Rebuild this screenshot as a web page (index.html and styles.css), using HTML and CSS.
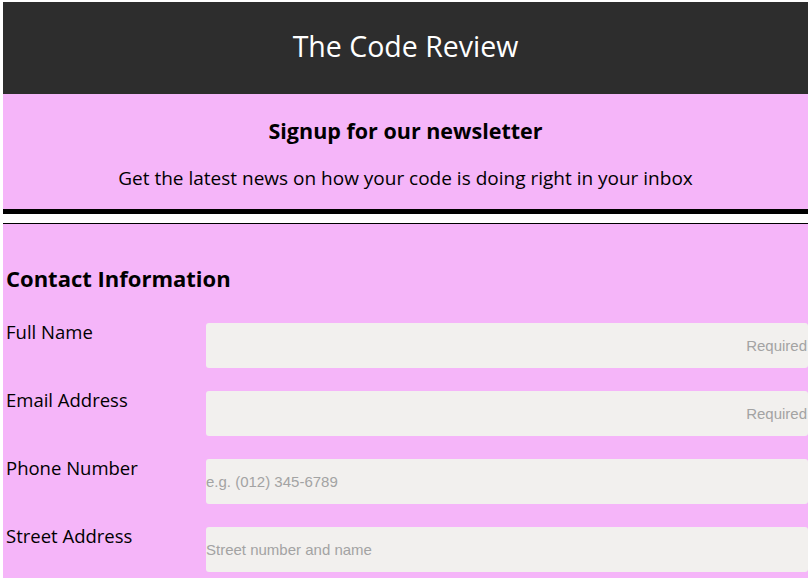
FILE: index.html
```html
<!DOCTYPE html>
<html lang="en">
<head>
<meta charset="utf-8">
<title>The Code Review</title>
<link rel="stylesheet" href="styles.css">
</head>
<body>
<div class="page">
  <header class="masthead">
    <h1 class="masthead-title">The Code Review</h1>
  </header>
  <section class="intro">
    <h2 class="intro-title">Signup for our newsletter</h2>
    <p class="intro-text">Get the latest news on how your code is doing right in your inbox</p>
  </section>
  <div class="divider"></div>
  <form class="signup">
    <h3 class="section-title">Contact Information</h3>
    <div class="field">
      <label class="field-label" for="name">Full Name</label>
      <input class="field-input align-right" id="name" type="text" placeholder="Required">
    </div>
    <div class="field">
      <label class="field-label" for="email">Email Address</label>
      <input class="field-input align-right" id="email" type="email" placeholder="Required">
    </div>
    <div class="field">
      <label class="field-label" for="phone">Phone Number</label>
      <input class="field-input" id="phone" type="tel" placeholder="e.g. (012) 345-6789">
    </div>
    <div class="field">
      <label class="field-label" for="street">Street Address</label>
      <input class="field-input" id="street" type="text" placeholder="Street number and name">
    </div>
  </form>
</div>
</body>
</html>
```

FILE: styles.css
```css
html, body {
  margin: 0;
  padding: 0;
  background: #ffffff;
  overflow: hidden;
}

.page {
  margin: 2px 0 0 3px;
  font-family: "Open Sans", "Noto Sans", sans-serif;
  color: #000;
}

.masthead {
  background: #2d2d2d;
  height: 92px;
  display: flex;
  align-items: center;
  justify-content: center;
}

.masthead-title {
  margin: 0 0 4px;
  color: #ffffff;
  font-weight: 400;
  font-size: 28.5px;
  line-height: 1;
}

.intro {
  background: #f5b5f9;
  height: 115px;
  border-bottom: 5px solid #000;
  box-sizing: content-box;
  display: flex;
  flex-direction: column;
  align-items: center;
}

.intro-title {
  margin: 24px 0 0;
  font-size: 21.5px;
  font-weight: 700;
  line-height: 26px;
}

.intro-text {
  margin: 22px 0 0;
  font-size: 19px;
  line-height: 24px;
}

.divider {
  margin-top: 9px;
  border-top: 1px solid #000;
}

.signup {
  background: #f5b5f9;
  padding: 39px 0 0 3px;
  display: flex;
  flex-direction: column;
}

.section-title {
  margin: 0 0 30px;
  font-size: 22px;
  font-weight: 700;
  line-height: 30px;
}

.field {
  display: flex;
  align-items: flex-start;
  margin-bottom: 23px;
}

.field-label {
  width: 200px;
  flex: none;
  font-size: 18.5px;
  line-height: 17px;
}

.field-input {
  flex: 1;
  height: 45px;
  box-sizing: border-box;
  border: none;
  border-radius: 3px;
  background: #f2f0ee;
  padding: 0 1px 0 0;
  margin: 0;
  font-family: "Liberation Sans", Arial, sans-serif;
  font-size: 15px;
  color: #333;
  outline: none;
}

.field-input::placeholder {
  color: #a3a3a3;
}

.align-right {
  text-align: right;
}
```
